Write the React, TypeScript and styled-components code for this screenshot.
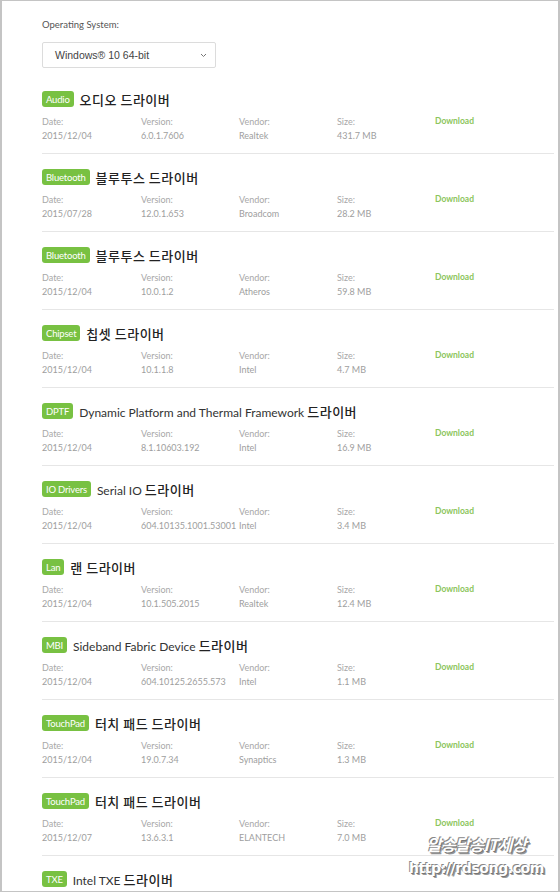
import styled, { createGlobalStyle } from "styled-components";

const GlobalStyle = createGlobalStyle`
  html, body {
    margin: 0;
    padding: 0;
    background: #fff;
  }
  body {
    font-family: Lato, "Noto Sans", "Noto Sans CJK KR", sans-serif;
  }
`;

type Driver = {
  tag: string;
  name: string;
  date: string;
  version: string;
  vendor: string;
  size: string;
};

const drivers: Driver[] = [
  { tag: "Audio", name: "오디오 드라이버", date: "2015/12/04", version: "6.0.1.7606", vendor: "Realtek", size: "431.7 MB" },
  { tag: "Bluetooth", name: "블루투스 드라이버", date: "2015/07/28", version: "12.0.1.653", vendor: "Broadcom", size: "28.2 MB" },
  { tag: "Bluetooth", name: "블루투스 드라이버", date: "2015/12/04", version: "10.0.1.2", vendor: "Atheros", size: "59.8 MB" },
  { tag: "Chipset", name: "칩셋 드라이버", date: "2015/12/04", version: "10.1.1.8", vendor: "Intel", size: "4.7 MB" },
  { tag: "DPTF", name: "Dynamic Platform and Thermal Framework 드라이버", date: "2015/12/04", version: "8.1.10603.192", vendor: "Intel", size: "16.9 MB" },
  { tag: "IO Drivers", name: "Serial IO 드라이버", date: "2015/12/04", version: "604.10135.1001.53001", vendor: "Intel", size: "3.4 MB" },
  { tag: "Lan", name: "랜 드라이버", date: "2015/12/04", version: "10.1.505.2015", vendor: "Realtek", size: "12.4 MB" },
  { tag: "MBI", name: "Sideband Fabric Device 드라이버", date: "2015/12/04", version: "604.10125.2655.573", vendor: "Intel", size: "1.1 MB" },
  { tag: "TouchPad", name: "터치 패드 드라이버", date: "2015/12/04", version: "19.0.7.34", vendor: "Synaptics", size: "1.3 MB" },
  { tag: "TouchPad", name: "터치 패드 드라이버", date: "2015/12/07", version: "13.6.3.1", vendor: "ELANTECH", size: "7.0 MB" },
  { tag: "TXE", name: "Intel TXE 드라이버", date: "", version: "", vendor: "", size: "" },
];

const Frame = styled.div`
  position: relative;
  box-sizing: border-box;
  width: 560px;
  height: 892px;
  overflow: hidden;
  border-top: 1px solid #c4c4c4;
  border-left: 2px solid #c4c4c4;
  border-right: 2px solid #c4c4c4;
  border-bottom: 1px solid #c4c4c4;
  padding: 17px 4px 0 40px;
`;

const Label = styled.div`
  font-size: 9.5px;
  color: #555;
  line-height: 14px;
`;

const Select = styled.div`
  margin-top: 10px;
  box-sizing: border-box;
  width: 174px;
  height: 26px;
  border: 1px solid #dcdcdc;
  border-radius: 2px;
  display: flex;
  align-items: center;
  justify-content: space-between;
  padding: 0 8px 0 12px;
  font-family: "Liberation Sans", Arial, sans-serif;
  font-size: 10.5px;
  color: #444;
`;

const List = styled.div`
  margin-top: 8px;
`;

const Row = styled.div`
  box-sizing: border-box;
  height: 78px;
  padding-top: 13px;
  border-bottom: 1px solid #e6e6e6;
`;

const Header = styled.div`
  display: flex;
  align-items: center;
  height: 20px;
  gap: 6px;
`;

const Tag = styled.span`
  display: inline-flex;
  align-items: center;
  height: 16px;
  padding: 0 4px;
  border-radius: 3px;
  background: #78c142;
  color: #fff;
  font-size: 9.5px;
  letter-spacing: -0.2px;
`;

const Title = styled.span`
  font-size: 12px;
  color: #333;
  white-space: nowrap;
  span {
    font-family: "Noto Sans CJK KR", sans-serif;
    font-size: 13px;
    font-weight: 500;
    letter-spacing: 0.5px;
    color: #222;
  }
`;

const Details = styled.div`
  margin-top: 6px;
  display: grid;
  grid-template-columns: 99px 98px 98px 98px auto;
  font-size: 9px;
  line-height: 14px;
`;

const Cell = styled.div<{ $value?: boolean }>`
  color: ${(p) => (p.$value ? "#9e9e9e" : "#a8a8a8")};
  white-space: nowrap;
`;

const Download = styled.div`
  color: #8cc55c;
  font-weight: 700;
  font-size: 8.5px;
  line-height: 12px;
`;

const Watermark = styled.div`
  position: absolute;
  right: 14px;
  bottom: 16px;
  display: flex;
  flex-direction: column;
  align-items: center;
  color: #fff;
  font-family: "Noto Sans CJK KR", sans-serif;
  font-weight: 700;
  text-shadow: 1px 1px 0 #777, 2px 2px 0 #999, -1px -1px 0 #888;
  line-height: 1;
`;

const MarkTop = styled.div`
  font-size: 16px;
  font-style: italic;
  margin-bottom: 9px;
  letter-spacing: -0.5px;
`;

const MarkBottom = styled.div`
  font-size: 14px;
  font-family: "DejaVu Sans", sans-serif;
  letter-spacing: -0.4px;
`;

const splitName = (name: string) => {
  const i = name.lastIndexOf("드라이버");
  const head = name.slice(0, i);
  const isLatin = /^[A-Za-z]/.test(head);
  return { head, isLatin };
};

const DriverRow = ({ d }: { d: Driver }) => {
  const { head, isLatin } = splitName(d.name);
  return (
    <Row>
      <Header>
        <Tag>{d.tag}</Tag>
        <Title>
          {isLatin ? head : <span>{head}</span>}
          <span>드라이버</span>
        </Title>
      </Header>
      {d.date && (
        <Details>
          <Cell>Date:</Cell>
          <Cell>Version:</Cell>
          <Cell>Vendor:</Cell>
          <Cell>Size:</Cell>
          <Download>Download</Download>
          <Cell $value>{d.date}</Cell>
          <Cell $value>{d.version}</Cell>
          <Cell $value>{d.vendor}</Cell>
          <Cell $value>{d.size}</Cell>
          <div />
        </Details>
      )}
    </Row>
  );
};

export default function App() {
  return (
    <>
      <GlobalStyle />
      <Frame>
        <Label>Operating System:</Label>
        <Select>
          <span>Windows® 10 64-bit</span>
          <svg width="7" height="5" viewBox="0 0 7 5">
            <path d="M1 1l2.5 2.5L6 1" fill="none" stroke="#777" strokeWidth="1" />
          </svg>
        </Select>
        <List>
          {drivers.map((d, i) => (
            <DriverRow key={i} d={d} />
          ))}
        </List>
        <Watermark>
          <MarkTop>알송달송IT세상</MarkTop>
          <MarkBottom>http://rdsong.com</MarkBottom>
        </Watermark>
      </Frame>
    </>
  );
}
